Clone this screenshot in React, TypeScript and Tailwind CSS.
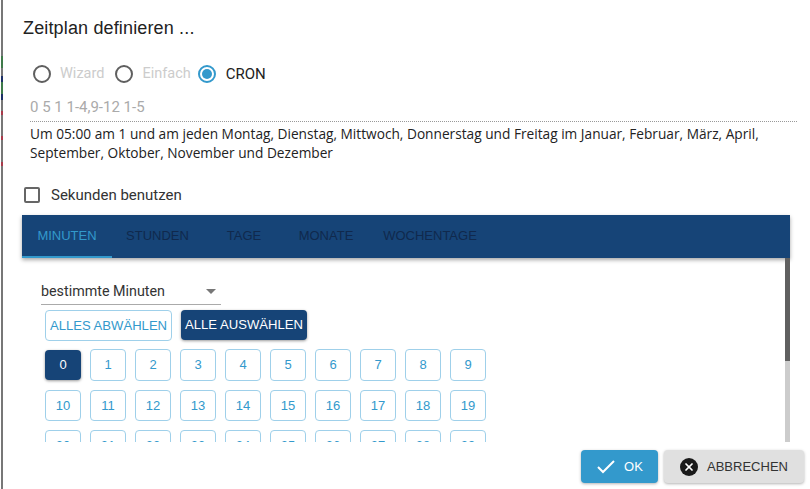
import { X } from "lucide-react";

const minuteRows = [
  [0, 1, 2, 3, 4, 5, 6, 7, 8, 9],
  [10, 11, 12, 13, 14, 15, 16, 17, 18, 19],
  [20, 21, 22, 23, 24, 25, 26, 27, 28, 29],
];

const tabs = [
  { label: "MINUTEN", width: "w-[90px]", active: true },
  { label: "STUNDEN", width: "w-[91px]", active: false },
  { label: "TAGE", width: "w-[82px]", active: false },
  { label: "MONATE", width: "w-[82px]", active: false },
  { label: "WOCHENTAGE", width: "w-[126px]", active: false },
];

// the page behind the dialog peeks through at the left edge
const edgeBits = [
  { h: "h-[56px]", color: "bg-[#777]" },
  { h: "h-[12px]", color: "bg-[#3f7a4a]" },
  { h: "h-[8px]", color: "bg-[#777]" },
  { h: "h-[6px]", color: "bg-[#1c2f66]" },
  { h: "h-[12px]", color: "bg-[#3f7a4a]" },
  { h: "h-[6px]", color: "bg-[#1c2f66]" },
  { h: "h-[11px]", color: "bg-[#777]" },
  { h: "h-[4px]", color: "bg-[#a83a4a]" },
  { h: "h-[21px]", color: "bg-[#777]" },
  { h: "h-[4px]", color: "bg-[#a83a4a]" },
  { h: "h-[22px]", color: "bg-[#777]" },
  { h: "h-[4px]", color: "bg-[#a83a4a]" },
  { h: "flex-1", color: "bg-[#777]" },
];

function Radio(props: { label: string; checked?: boolean }) {
  return (
    <div className={"flex items-center " + (props.checked ? "-ml-[4px]" : "")}>
      <span
        className={
          "flex h-[18px] w-[18px] items-center justify-center rounded-full border-2 " +
          (props.checked ? "border-[#3399cc]" : "border-[#5f5f5f]")
        }
      >
        {props.checked && <span className="h-[10px] w-[10px] rounded-full bg-[#3399cc]" />}
      </span>
      <span
        className={
          props.checked ? "ml-[10px] text-[15px] text-[#222]" : "ml-[9px] text-[14.5px] text-[#ccc]"
        }
      >
        {props.label}
      </span>
    </div>
  );
}

function App() {
  return (
    <div className="flex h-[489px] w-[810px] overflow-hidden bg-white font-['Roboto',sans-serif]">
      <div className="ml-[1px] flex w-[2px] flex-col">
        {edgeBits.map((bit, i) => (
          <div key={i} className={bit.h + " " + bit.color} />
        ))}
      </div>
      <div className="relative min-w-0 flex-1">
        <h1 className="pl-[20px] pt-[16px] font-['Liberation_Sans',sans-serif] text-[18px] leading-[24px] tracking-[0.15px] text-[#222]">
          Zeitplan definieren ...
        </h1>

        <div className="ml-[30px] mt-[24px] flex h-[20px] items-center gap-[11px]">
          <Radio label="Wizard" />
          <Radio label="Einfach" />
          <Radio label="CRON" checked />
        </div>

        <div className="ml-[27px] mr-[13px] mt-[13px] border-b border-dotted border-[#999] pb-[4px] text-[15px] leading-[20px] text-[#aaa]">
          0 5 1 1-4,9-12 1-5
        </div>
        <p className="ml-[27px] mr-[13px] mt-[2px] font-['Open_Sans',sans-serif] text-[13.7px] leading-[19px] text-[#222]">
          Um 05:00 am 1 und am jeden Montag, Dienstag, Mittwoch, Donnerstag und Freitag im Januar, Februar, März, April,
          <br />
          September, Oktober, November und Dezember
        </p>

        <div className="ml-[21px] mt-[23px] flex h-[20px] items-center">
          <span className="h-[16px] w-[16px] rounded-[2px] border-2 border-[#666]" />
          <span className="ml-[11px] text-[15px] text-[#333]">Sekunden benutzen</span>
        </div>

        <div className="ml-[19px] mr-[20px] mt-[10px] flex h-[43px] bg-[#164477] font-['Liberation_Sans',sans-serif] text-[13px] shadow-[0_2px_4px_rgba(0,0,0,0.35)]">
          {tabs.map((tab) => (
            <div
              key={tab.label}
              className={
                "flex items-center justify-center border-b-2 " +
                tab.width +
                (tab.active ? " border-[#3399cc] text-[#3399cc]" : " border-transparent text-[#10294d]")
              }
            >
              {tab.label}
            </div>
          ))}
        </div>

        <div className="relative ml-[19px] mr-[20px] h-[184px] overflow-hidden">
          <div className="absolute bottom-0 right-0 top-0 w-[5px] bg-[#ccc]">
            <div className="h-[103px] bg-[#606060]" />
          </div>
          <div className="ml-[19px] mt-[18px] flex h-[29px] w-[180px] items-start justify-between border-b border-[#aaa] text-[14.3px] leading-[30px] text-[#333]">
            <span>bestimmte Minuten</span>
            <span className="mr-[5px] mt-[13px] h-0 w-0 border-x-[5px] border-t-[5px] border-x-transparent border-t-[#777]" />
          </div>
          <div className="ml-[23px] mt-[5px] flex items-start gap-[9px] font-['Liberation_Sans',sans-serif] text-[13.1px]">
            <button className="h-[31px] w-[127px] rounded-[4px] border border-[#9fd0ea] text-[#3399cc]">
              ALLES ABWÄHLEN
            </button>
            <button className="h-[30px] w-[126px] rounded-[4px] bg-[#164477] text-white shadow-[0_1px_3px_rgba(0,0,0,0.4)]">
              ALLE AUSWÄHLEN
            </button>
          </div>
          <div className="ml-[23px] mt-[8px] flex flex-col gap-[9px] font-['Liberation_Sans',sans-serif] text-[13px]">
            {minuteRows.map((row) => (
              <div key={row[0]} className="flex h-[31.5px] items-center gap-[9px]">
                {row.map((n) =>
                  n === 0 ? (
                    <button
                      key={n}
                      className="h-[30px] w-[36px] rounded-[4px] bg-[#164477] text-white shadow-[0_1px_3px_rgba(0,0,0,0.4)]"
                    >
                      {n}
                    </button>
                  ) : (
                    <button
                      key={n}
                      className="h-[31.5px] w-[36px] rounded-[4px] border border-[#9fd0ea] text-[#3399cc]"
                    >
                      {n}
                    </button>
                  )
                )}
              </div>
            ))}
          </div>
        </div>

        <div className="mr-[6px] mt-[8px] flex justify-end gap-[6px] font-['Liberation_Sans',sans-serif] text-[13px]">
          <button className="flex h-[33px] w-[77px] items-center justify-center gap-[9px] rounded-[4px] bg-[#3399cc] pl-[1px] text-white shadow-[0_1px_3px_rgba(0,0,0,0.3)]">
            <svg width="18" height="14" viewBox="0 0 18 14" fill="none" stroke="white" strokeWidth="2">
              <path d="M1 7l5 5L17 1" />
            </svg>
            OK
          </button>
          <button className="flex h-[33px] w-[140px] items-center justify-center gap-[9px] rounded-[4px] bg-[#e0e0e0] text-[#333] shadow-[0_1px_3px_rgba(0,0,0,0.3)]">
            <span className="flex h-[18px] w-[18px] items-center justify-center rounded-full bg-[#1a1a1a]">
              <X size={12} color="white" strokeWidth={3.5} />
            </span>
            ABBRECHEN
          </button>
        </div>
      </div>
    </div>
  );
}

export default App;
